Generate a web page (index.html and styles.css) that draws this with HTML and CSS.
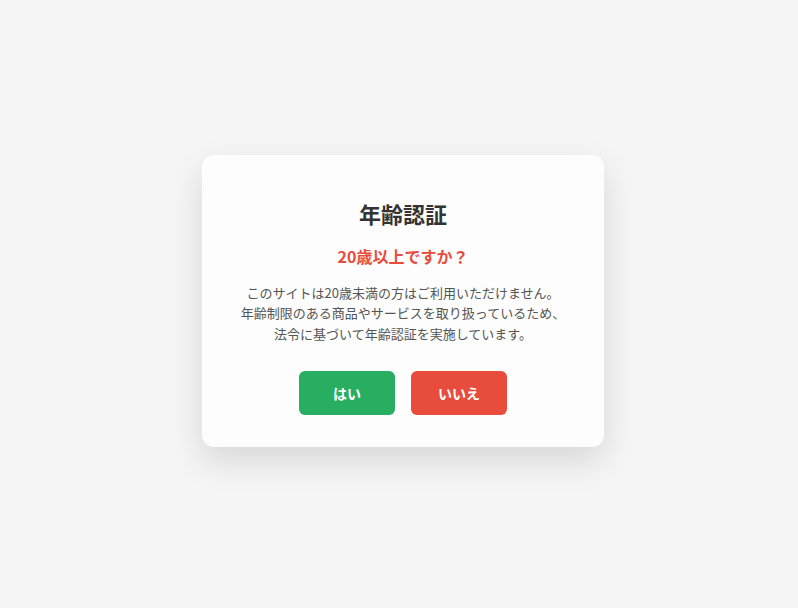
FILE: index.html
```html
<!DOCTYPE html>
<html lang="ja">
  <head>
    <meta charset="UTF-8" />
    <meta name="viewport" content="width=device-width, initial-scale=1.0" />
    <title>年齢認証</title>
    <link rel="stylesheet" href="styles.css">
  </head>
  <body>
    <div class="age-gate">
      <h1>年齢認証</h1>
      <p class="question">20歳以上ですか？</p>
      <p class="notice">
        このサイトは20歳未満の方はご利用いただけません。<br />
        年齢制限のある商品やサービスを取り扱っているため、<br />
        法令に基づいて年齢認証を実施しています。
      </p>
      <div class="actions">
        <button class="button button-yes">はい</button>
        <button class="button button-no">いいえ</button>
      </div>
    </div>
  </body>
</html>
```

FILE: styles.css
```css
:root {
  --text-color: #333;
  --muted-color: #555;
  --yes-color: #27ae60;
  --no-color: #e74c3c;
  --font-family: "Noto Sans CJK JP", "Noto Sans", sans-serif;
}

* {
  margin: 0;
  padding: 0;
  box-sizing: border-box;
}

body {
  font-family: var(--font-family);
  color: var(--text-color);
  background-color: #f5f5f5;
  min-height: 100vh;
  display: flex;
  align-items: center;
  justify-content: center;
  padding: 0 0 6px 8px;
}

.age-gate {
  width: 402px;
  padding: 32px 24px;
  background-color: #fcfdfc;
  border-radius: 12px;
  box-shadow: 0 14px 34px rgba(0, 0, 0, 0.12);
  text-align: center;
}

h1 {
  font-size: 22px;
  font-weight: 700;
  line-height: 32px;
  margin-top: 10px;
}

.question {
  font-size: 16px;
  font-weight: 700;
  line-height: 24px;
  color: var(--no-color);
  margin-top: 15px;
}

.notice {
  font-size: 13px;
  line-height: 20.5px;
  color: var(--muted-color);
  margin-top: 15px;
  white-space: nowrap;
}

.actions {
  display: flex;
  justify-content: center;
  gap: 16px;
  margin-top: 27px;
}

.button {
  min-width: 96px;
  height: 44px;
  padding: 0 24px;
  border: none;
  border-radius: 6px;
  color: white;
  font-family: var(--font-family);
  font-size: 14px;
  font-weight: 700;
  cursor: pointer;
}

.button-yes {
  background-color: var(--yes-color);
}

.button-no {
  background-color: var(--no-color);
}
```
